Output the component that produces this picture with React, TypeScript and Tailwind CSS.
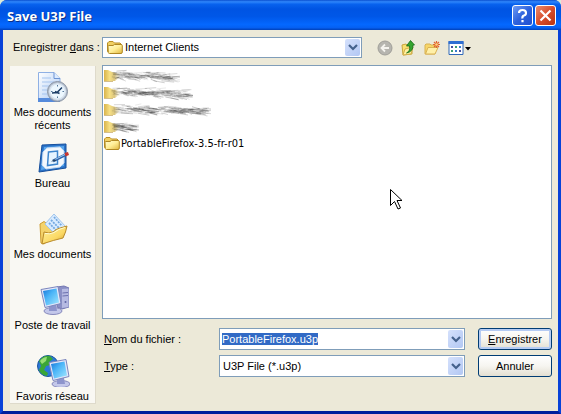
import { useEffect, useRef, type ReactNode } from 'react';

function Chevron() {
  return (
    <span className="pointer-events-none absolute inset-y-0.5 right-0.5 flex w-[15px] items-center justify-center rounded-xs bg-linear-to-br from-[#d5e1fc] to-[#b2c7f3]">
      <svg width="10" height="7" viewBox="0 0 10 7" fill="none" stroke="#44618c" strokeWidth="2.2">
        <path d="M1 1l4 4 4-4" />
      </svg>
    </span>
  );
}

function Folder() {
  return (
    <svg width="16" height="16" viewBox="0 0 16 16" className="shrink-0">
      <defs>
        <linearGradient id="folderFront" x1="0" y1="0" x2="1" y2="1">
          <stop offset="0" stopColor="#fffbd0" />
          <stop offset=".5" stopColor="#ffee97" />
          <stop offset="1" stopColor="#dfb53c" />
        </linearGradient>
      </defs>
      <path d="M.5 11.500V3L2 1.500h4L7.500 3H13l1.500 1.500V12z" fill="#f0cf62" stroke="#b98e24" />
      <path d="M2.500 13.500Q1.500 13.500 1.300 12.500L1 6.500Q1 5.500 2 5.500h4l1.500-1H14q1.300 0 1.300 1v6.500Q15.300 13.500 14 13.500z" fill="url(#folderFront)" stroke="#b08824" />
    </svg>
  );
}

function Scribble({ width, seed }: { width: number; seed: number }) {
  let s = seed;
  const rnd = () => {
    s = (s * 16807) % 2147483647;
    return s / 2147483647;
  };
  const lines = Array.from({ length: Math.round(width * 1.7) }, () => {
    const x = 7 + rnd() * (width - 14);
    const y = 3 + (x / width) * 3 + (rnd() + rnd()) * 4.5;
    const len = 4 + rnd() * 9;
    return { x, y, x2: Math.min(width, x + len), y2: y + 1 + (rnd() - 0.6) * 4, o: 0.08 + rnd() * 0.3 };
  });
  return (
    <svg width={width} height="17" viewBox={`0 0 ${width} 17`} className="block">
      <defs>
        <linearGradient id="fadedFolder" x1="0" y1="0" x2="1" y2="0">
          <stop offset="0" stopColor="#d9b44c" />
          <stop offset=".35" stopColor="#f6df83" />
          <stop offset=".65" stopColor="#dcc67e" />
          <stop offset="1" stopColor="#e8e2c8" stopOpacity=".3" />
        </linearGradient>
      </defs>
      <path d="M0 3h4l4 2 8 2v3l-5 4H0z" fill="url(#fadedFolder)" />
      <path d="M0 14.500h9" stroke="#b8923c" strokeOpacity=".6" />
      {lines.map((l, i) => (
        <path key={i} d={`M${l.x} ${l.y}L${l.x2} ${l.y2}`} stroke="#222" strokeWidth=".7" strokeOpacity={l.o} />
      ))}
    </svg>
  );
}

function Monitor() {
  return (
    <>
      <ellipse cx="16" cy="27" rx="9" ry="3.500" fill="#c3c7ea" stroke="#8689bc" />
      <path d="M12 21h7l1 6h-8z" fill="#8d94cc" />
      <path d="M4 5.500L21 2.500l3 17-16 4z" fill="#e3e7fa" stroke="#7b86bd" />
      <path d="M6 7l13.500-2.500 2.500 14L9 21.500z" fill="url(#screen)" />
    </>
  );
}

function ScreenDefs() {
  return (
    <defs>
      <linearGradient id="screen" x1="0" y1="0" x2="1" y2="1">
        <stop offset="0" stopColor="#1675d8" />
        <stop offset=".4" stopColor="#4ab4f7" />
        <stop offset="1" stopColor="#a4e8ff" />
      </linearGradient>
    </defs>
  );
}

const recent = (
  <svg width="32" height="32" viewBox="0 0 32 32">
    <defs>
      <linearGradient id="sheet" x1="0" y1="0" x2="1" y2="1">
        <stop offset="0" stopColor="#ffffff" />
        <stop offset="1" stopColor="#a9c8f4" />
      </linearGradient>
    </defs>
    <path d="M1.500 1.500H17l6 6V30H1.500z" fill="url(#sheet)" stroke="#8fb0e4" />
    <path d="M17 1.500v6h6" fill="#dcebff" stroke="#6c93d2" />
    <path d="M5 7h9M5 11h12M5 15h7M5 19h5M5 23h5" stroke="#a5c4ee" />
    <path d="M1 27h22v4H1z" fill="#568bdc" />
    <circle cx="20.500" cy="20.500" r="10" fill="#b4bfce" stroke="#8893a3" />
    <circle cx="20.500" cy="20.500" r="7.800" fill="#edf8ff" stroke="#d9e4ef" strokeWidth="1.500" />
    <path d="M15 22l5-.5 5-5M22.500 22.500L18 20.500" fill="none" stroke="#1b3d66" strokeWidth="1.500" />
    <path d="M20.500 14v1.500M20.500 25.500V27M14 20.500h1.500M25.500 20.500H27" stroke="#537799" />
  </svg>
);

const desktop = (
  <svg width="32" height="32" viewBox="0 0 32 32">
    <path d="M5 3l24-1v24L2 30z" fill="#2b74c9" stroke="#164f9c" />
    <path d="M7 5l20-1v20L4 28z" fill="#5aa6ec" />
    <path d="M10 6l13-1 4 4v12l-4 4-14 2-4-4 1-13z" fill="#f3f8fd" stroke="#c4daf2" />
    <path d="M11.500 10l9-1v13l-10 1.500z" fill="#e6f4ff" stroke="#3d85cd" strokeWidth="1.500" />
    <path d="M16 19l12-6" stroke="#2c62a8" strokeWidth="3" />
    <path d="M17 18l11-5.500" stroke="#a5d0f7" />
    <path d="M27.500 11l3.500-1 1 3-3.500 1.500z" fill="#c9362e" />
    <path d="M14 19.500l4-2.500 1 2z" fill="#27415f" />
  </svg>
);

const documents = (
  <svg width="32" height="32" viewBox="0 0 32 32">
    <defs>
      <linearGradient id="bigFolder" x1="0" y1="0" x2="1" y2="1">
        <stop offset="0" stopColor="#fff3a6" />
        <stop offset=".6" stopColor="#fbd964" />
        <stop offset="1" stopColor="#d09a28" />
      </linearGradient>
    </defs>
    <path d="M3 11l4-2.500 4 3 15 4L7 31l-3-1z" fill="#f4d36b" stroke="#cc9b2f" />
    <path d="M17 1l12 13-9 9L8 11z" fill="#d9ecff" stroke="#a2c6ec" />
    <path d="M17 4l8 9M14 7l9 9M12 10l8 8" stroke="#75a9e1" strokeWidth="1.800" strokeDasharray="2 1" />
    <path d="M5 31l2-12q5 2 9 0 3-3 7-4l7-2q-1 6-4 12-9 2-21 6z" fill="url(#bigFolder)" stroke="#b88a2b" />
    <path d="M8 20.500q5 1 9-1 4-3.500 11-5" fill="none" stroke="#fffbd2" />
  </svg>
);

const computer = (
  <svg width="32" height="32" viewBox="0 0 32 32">
    <ScreenDefs />
    <path d="M20 3l7-1 5 2v19l-7 2-5-2z" fill="#8a8fc5" stroke="#7478b2" />
    <path d="M25 5l6.500-.5V23L25 24z" fill="#b6bae2" />
    <path d="M25.500 9l5.500-.5M25.500 12l5.500-.5" stroke="#6b70ad" />
    <circle cx="28.500" cy="18" r="1" fill="#5f66a5" />
    <Monitor />
  </svg>
);

const network = (
  <svg width="34" height="32" viewBox="0 0 34 32">
    <ScreenDefs />
    <circle cx="12" cy="11" r="10.500" fill="#2a79d8" stroke="#1c559d" />
    <path d="M3 6q4-6 11-5l3 3-4 3 1 3-4 1-2 4 4 3-1 3q-6-1-8-6l2-4z" fill="#3aa637" />
    <path d="M4 6q3-4 7-4l-1 4-4 3z" fill="#98dd76" />
    <g transform="translate(9 2)">
      <Monitor />
    </g>
  </svg>
);

function Place({ icon, children }: { icon: ReactNode; children: ReactNode }) {
  return (
    <button type="button" className="flex h-[71px] flex-col items-center gap-[3px] pt-[5px] text-center leading-[13px] last:h-auto">
      {icon}
      <span>{children}</span>
    </button>
  );
}

const box = 'w-full border border-[#7f9db9] bg-white outline-none';
const action =
  'h-[22px] w-full rounded-[3px] border border-[#003c74] bg-linear-to-b from-white via-[#f6f5f0] to-[#e3dfd2]';

export default function App() {
  const fileName = useRef<HTMLInputElement>(null);
  useEffect(() => {
    fileName.current?.focus();
    fileName.current?.select();
  }, []);

  return (
    <div className="bg-[#dcebd9] font-['Liberation_Sans',Arial,sans-serif] text-[11px] text-black">
      <div className="relative overflow-hidden rounded-t-[7px] bg-[#0842d8]">
        <header className="flex h-[30px] items-center gap-0.5 bg-[linear-gradient(to_bottom,#0a4fd0_0%,#2f86fb_6%,#0862ee_14%,#0054e3_30%,#0057e8_55%,#0468ff_82%,#0560f2_92%,#0040b8_100%)] pt-px pr-[5px] pl-[7px]">
          <h1 className="flex-1 pt-0.5 font-['Open_Sans',sans-serif] text-[13px] font-bold text-white [text-shadow:1px_1px_#0c2f88]">Save U3P File</h1>
          <button type="button" aria-label="Aide" className="flex size-[21px] items-center justify-center rounded-[3px] border border-white bg-linear-to-br from-[#6f9bf5] via-[#2f62dc] to-[#1f4fd0]">
            <svg width="13" height="15" viewBox="0 0 13 15" fill="none" stroke="#fff" strokeWidth="2.200">
              <path d="M3 5Q3 2 6.500 2T10 5Q10 7 8 7.500T6.500 10.500M6.500 12v2.200" />
            </svg>
          </button>
          <button type="button" aria-label="Fermer" className="flex size-[21px] items-center justify-center rounded-[3px] border border-white bg-linear-to-br from-[#e88b6c] via-[#d84d2b] to-[#b8330f]">
            <svg width="13" height="13" viewBox="0 0 13 13" stroke="#fff" strokeWidth="2.200">
              <path d="M1.500 1.500l10 10M11.500 1.500l-10 10" />
            </svg>
          </button>
        </header>

        <main className="border-x-3 border-b-3 border-x-[#0842d8] border-b-[#001f9c] bg-[#ece9d8] pr-1.5 pb-[7px] pl-[7px]">
          <div className="flex h-[35px] items-center">
            <label htmlFor="folder" className="w-[92px] shrink-0 pl-[3px]">
              Enregistrer <u>d</u>ans :
            </label>
            <div className="relative flex-1">
              <select id="folder" className={`${box} block h-[21px] appearance-none pl-[22px]`}>
                <option>Internet Clients</option>
              </select>
              <span className="pointer-events-none absolute top-[3px] left-[5px]">
                <Folder />
              </span>
              <Chevron />
            </div>
            <div className="mr-[81px] ml-[15px] flex items-center gap-[7px]">
              <button type="button" aria-label="Retour">
                <svg width="16" height="16" viewBox="0 0 16 16">
                  <circle cx="8" cy="8" r="7" fill="#b6b5af" stroke="#a09f99" />
                  <path d="M12 8H5M8 4.500L4.500 8 8 11.500" fill="none" stroke="#f4f3ee" strokeWidth="1.800" />
                </svg>
              </button>
              <button type="button" aria-label="Dossier parent">
                <svg width="16" height="16" viewBox="0 0 16 16">
                  <path d="M2 5l4-1 1 1 5-1v10l-9 1z" fill="#f9df70" stroke="#c8a53c" />
                  <path d="M3 15l2-6 8-2-2 7z" fill="#fff1a0" stroke="#d2ae4a" />
                  <path d="M6.500 13q4-2 3-7H6.500L10.500.500 14.500 5H13q.5 6.500-6.500 8z" fill="#35a52f" stroke="#166b19" strokeWidth=".8" />
                </svg>
              </button>
              <button type="button" aria-label="Nouveau dossier">
                <svg width="18" height="16" viewBox="0 0 18 16">
                  <path d="M2 14V5l1-1h4l1 1h4v9z" fill="#f7d668" stroke="#d8b152" />
                  <path d="M2.500 14L5 7.500h10L12 14z" fill="#fff0a8" stroke="#d9b254" />
                  <path d="M13.500 1v7M10 4.500h7M11 2l5 5M16 2l-5 5" stroke="#e06430" strokeWidth="1.200" />
                  <circle cx="13.500" cy="4.500" r="1.300" fill="#ffd27a" />
                </svg>
              </button>
              <button type="button" aria-label="Affichage">
                <svg width="23" height="16" viewBox="0 0 23 16">
                  <path d="M1 1.500h14v13H1z" fill="#fff" stroke="#2f68b8" />
                  <path d="M.5 1h15v3H.5z" fill="#2f6fd2" />
                  <path d="M3 6h2v2H3zM11 10h2v2h-2z" fill="#444f9e" />
                  <path d="M7 6h2v2H7zM3 10h2v2H3z" fill="#3c9e70" />
                  <path d="M11 6h2v2h-2zM7 10h2v2H7z" fill="#397dce" />
                  <path d="M17 7h6l-3 3.500z" fill="#000" />
                </svg>
              </button>
            </div>
          </div>

          <div className="flex gap-1.5">
            <nav className="mt-px flex w-[86px] shrink-0 flex-col border-r border-b border-[#dedacb] bg-[#f9f8f3]">
              <Place icon={recent}>
                Mes documents
                <br />
                récents
              </Place>
              <Place icon={desktop}>Bureau</Place>
              <Place icon={documents}>Mes documents</Place>
              <Place icon={computer}>Poste de travail</Place>
              <Place icon={network}>Favoris réseau</Place>
            </nav>

            <div className="flex min-w-0 flex-1 flex-col gap-[9px]">
              <ul className="h-[254px] border border-[#7f9db9] bg-white p-px">
                <li><Scribble width={76} seed={4211} /></li>
                <li><Scribble width={89} seed={977} /></li>
                <li><Scribble width={107} seed={31337} /></li>
                <li><Scribble width={35} seed={6021} /></li>
                <li className="flex h-[18px] items-center gap-px font-['DejaVu_Sans_Condensed','DejaVu_Sans',sans-serif]">
                  <Folder />
                  PortableFirefox-3.5-fr-r01
                </li>
              </ul>
              <div className="grid grid-cols-[117px_minmax(0,1fr)_74px] items-center gap-y-[5px]">
                <label htmlFor="name" className="pl-0.5"><u>N</u>om du fichier :</label>
                <div className="relative mr-[13px]">
                  <input
                    ref={fileName}
                    id="name"
                    defaultValue="PortableFirefox.u3p"
                    className={`${box} block h-[22px] pr-5 pl-0.5 selection:bg-[#316ac5] selection:text-white`}
                  />
                  <Chevron />
                </div>
                <button type="button" className={`${action} shadow-[inset_0_0_0_2px_#b5cbf3]`}><u>E</u>nregistrer</button>
                <label htmlFor="type" className="pl-0.5"><u>T</u>ype :</label>
                <div className="relative mr-[13px]">
                  <select id="type" className={`${box} block h-[22px] appearance-none pl-[3px]`}>
                    <option>U3P File (*.u3p)</option>
                  </select>
                  <Chevron />
                </div>
                <button type="button" className={action}>Annuler</button>
              </div>
            </div>
          </div>
        </main>

        <svg width="14" height="22" viewBox="0 0 14 22" className="pointer-events-none absolute top-[189px] left-[390px]">
          <path d="M.5.500v16l4-4 3.500 7.500 2.500-1-3.500-7.500h5z" fill="#fff" stroke="#000" />
        </svg>
      </div>
    </div>
  );
}
